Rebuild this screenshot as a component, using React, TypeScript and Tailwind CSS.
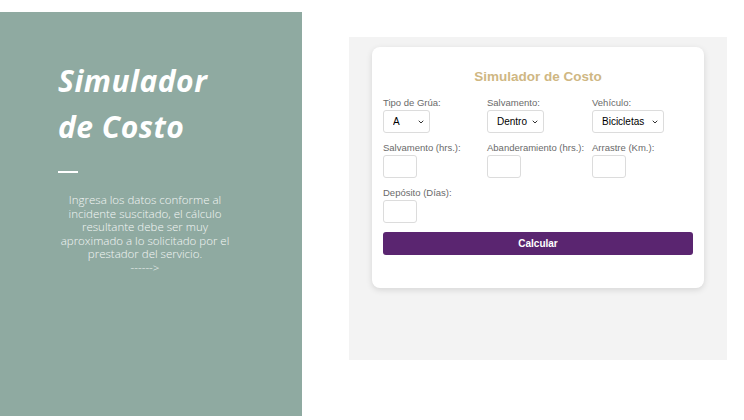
import { ChevronDown } from "lucide-react";

function Select({ value, options, width }: { value: string; options: string[]; width: string }) {
  return (
    <div className={`relative ${width}`}>
      <select
        defaultValue={value}
        className="block h-[23px] w-full appearance-none rounded-[3px] border border-[#dcdcdc] bg-white pl-[9px] text-[10px] text-black outline-none"
      >
        {options.map((o) => (
          <option key={o}>{o}</option>
        ))}
      </select>
      <ChevronDown className="pointer-events-none absolute right-[5px] top-[8px] h-[8px] w-[8px] text-[#333]" strokeWidth={3} />
    </div>
  );
}

function Field({ label, children }: { label: string; children: React.ReactNode }) {
  return (
    <div className="flex flex-col gap-[2px]">
      <label className="text-[9.5px] leading-[11px] text-[#6a6a6a]">{label}</label>
      {children}
    </div>
  );
}

function NumInput() {
  return <input type="text" className="block h-[23px] w-[34px] rounded-[3px] border border-[#dcdcdc] bg-white outline-none" />;
}

export default function App() {
  return (
    <div className="flex h-[420px] w-[744px] bg-white pt-[12px] font-['Liberation_Sans',Arial,sans-serif]">
      <div className="flex h-[404px] w-[302px] shrink-0 flex-col bg-[#8faaa1] pl-[58px] pt-[46px]">
        <h1 className="font-['Open_Sans',sans-serif] text-[30px] font-bold italic leading-[46px] tracking-[0.5px] text-white">
          Simulador
          <br />
          de Costo
        </h1>
        <div className="mt-[21px] h-[2px] w-[20px] bg-white" />
        <p className="-ml-[6px] mt-[20px] w-[186px] text-center font-['Open_Sans',sans-serif] text-[11.5px] font-light leading-[13.5px] text-[#f3f6f5]">
          Ingresa los datos conforme al
          <br />
          incidente suscitado, el cálculo
          <br />
          resultante debe ser muy
          <br />
          aproximado a lo solicitado por el
          <br />
          prestador del servicio.
          <br />
          ------&gt;
        </p>
      </div>

      <div className="ml-[47px] mt-[25px] h-[323px] w-[378px] bg-[#f3f3f3] pl-[23px] pt-[10px]">
        <div className="h-[241px] w-[332px] rounded-[8px] bg-white px-[11px] pt-[21px] shadow-[0_2px_6px_rgba(0,0,0,0.12)]">
          <h2 className="text-center text-[13.5px] font-bold leading-[18px] text-[#cfb783]">Simulador de Costo</h2>
          <div className="mt-[11px] grid grid-cols-[104px_105px_100px] gap-y-[9px]">
            <Field label="Tipo de Grúa:">
              <Select value="A" options={["A", "B", "C", "D"]} width="w-[47px]" />
            </Field>
            <Field label="Salvamento:">
              <Select value="Dentro" options={["Dentro", "Fuera"]} width="w-[57px]" />
            </Field>
            <Field label="Vehículo:">
              <Select value="Bicicletas" options={["Bicicletas", "Motocicletas", "Automóviles"]} width="w-[72px]" />
            </Field>
            <Field label="Salvamento (hrs.):">
              <NumInput />
            </Field>
            <Field label="Abanderamiento (hrs.):">
              <NumInput />
            </Field>
            <Field label="Arrastre (Km.):">
              <NumInput />
            </Field>
            <Field label="Depósito (Días):">
              <NumInput />
            </Field>
          </div>
          <button className="mt-[9px] block h-[23px] w-full rounded-[3px] bg-[#5a2570] text-[10px] font-bold text-white">
            Calcular
          </button>
        </div>
      </div>
    </div>
  );
}
